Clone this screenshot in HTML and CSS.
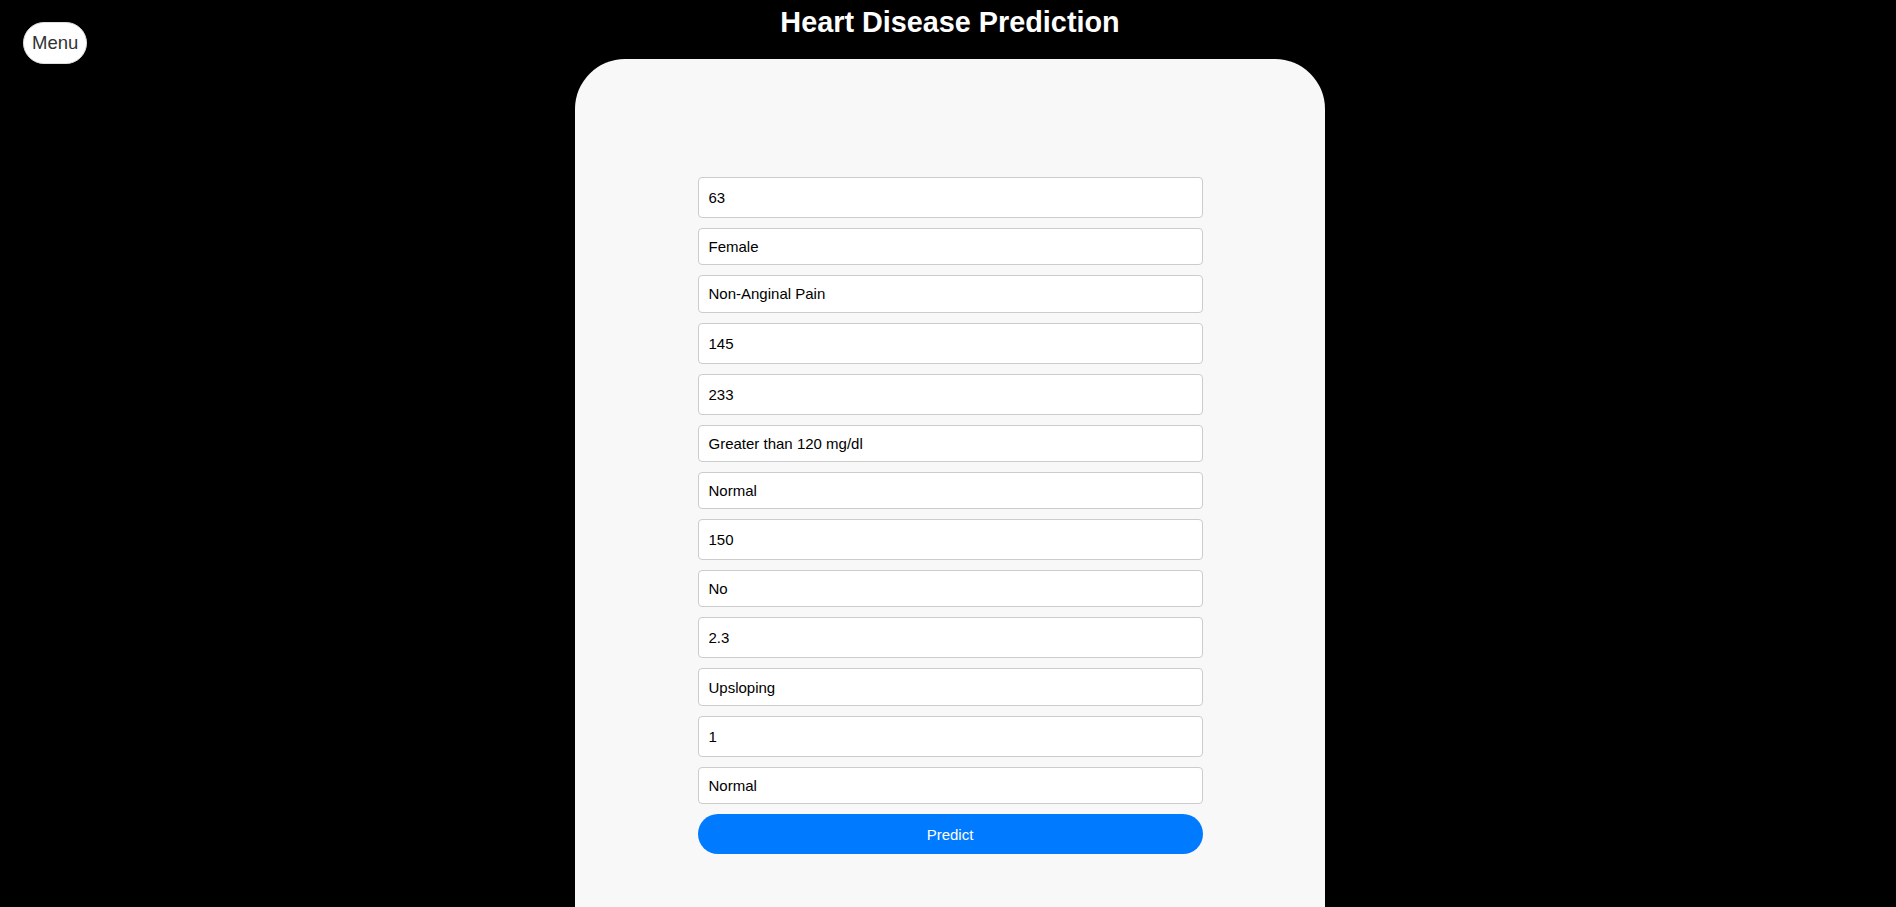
FILE: index.html
```html
<!DOCTYPE html>
<html lang="en">
<head>
<meta charset="utf-8">
<title>Heart Disease Prediction</title>
<link rel="stylesheet" href="styles.css">
</head>
<body>
<button class="menu-btn" type="button">Menu</button>
<h1 class="title">Heart Disease Prediction</h1>
<main class="card">
  <form class="form">
    <input class="field field-num" type="text" value="63">
    <select class="field field-sel"><option>Female</option></select>
    <select class="field field-sel"><option>Non-Anginal Pain</option></select>
    <input class="field field-num" type="text" value="145">
    <input class="field field-num" type="text" value="233">
    <select class="field field-sel"><option>Greater than 120 mg/dl</option></select>
    <select class="field field-sel"><option>Normal</option></select>
    <input class="field field-num" type="text" value="150">
    <select class="field field-sel"><option>No</option></select>
    <input class="field field-num" type="text" value="2.3">
    <select class="field field-sel"><option>Upsloping</option></select>
    <input class="field field-num" type="text" value="1">
    <select class="field field-sel"><option>Normal</option></select>
    <button class="predict" type="button">Predict</button>
  </form>
</main>
</body>
</html>
```

FILE: styles.css
```css
html, body {
  margin: 0;
  padding: 0;
  background: #000;
  font-family: "Liberation Sans", Arial, sans-serif;
}

body {
  min-height: 907px;
  padding-left: 4px;
  overflow: hidden;
}

.menu-btn {
  position: fixed;
  top: 22px;
  left: 23px;
  height: 42px;
  padding: 0 8px;
  border: 1px solid #ddd;
  border-radius: 21px;
  background: #fff;
  color: #333;
  font-family: "Liberation Sans", Arial, sans-serif;
  font-size: 18.5px;
  line-height: 1;
  cursor: pointer;
}

.title {
  margin: 0;
  padding-top: 6px;
  color: #fff;
  text-align: center;
  font-size: 28.8px;
  font-weight: bold;
  line-height: normal;
}

.card {
  width: 750px;
  margin: 20px auto 0;
  padding: 118px 0 160px;
  background: #f8f8f8;
  border-radius: 50px;
}

.form {
  width: 505px;
  margin: 0 auto;
  display: flex;
  flex-direction: column;
  gap: 10px;
}

.field {
  box-sizing: border-box;
  width: 100%;
  margin: 0;
  padding: 0 10px;
  border: 1px solid #ccc;
  border-radius: 4px;
  background: #fff;
  color: #000;
  font-family: "Liberation Sans", Arial, sans-serif;
  font-size: 15px;
  outline: none;
}

.field-num {
  height: 41px;
}

.field-sel {
  height: 37.3px;
  -webkit-appearance: none;
  appearance: none;
}

.predict {
  height: 40px;
  margin: 0;
  border: none;
  border-radius: 20px;
  background: #007bff;
  color: #fff;
  font-family: "Liberation Sans", Arial, sans-serif;
  font-size: 15px;
  cursor: pointer;
}
```
